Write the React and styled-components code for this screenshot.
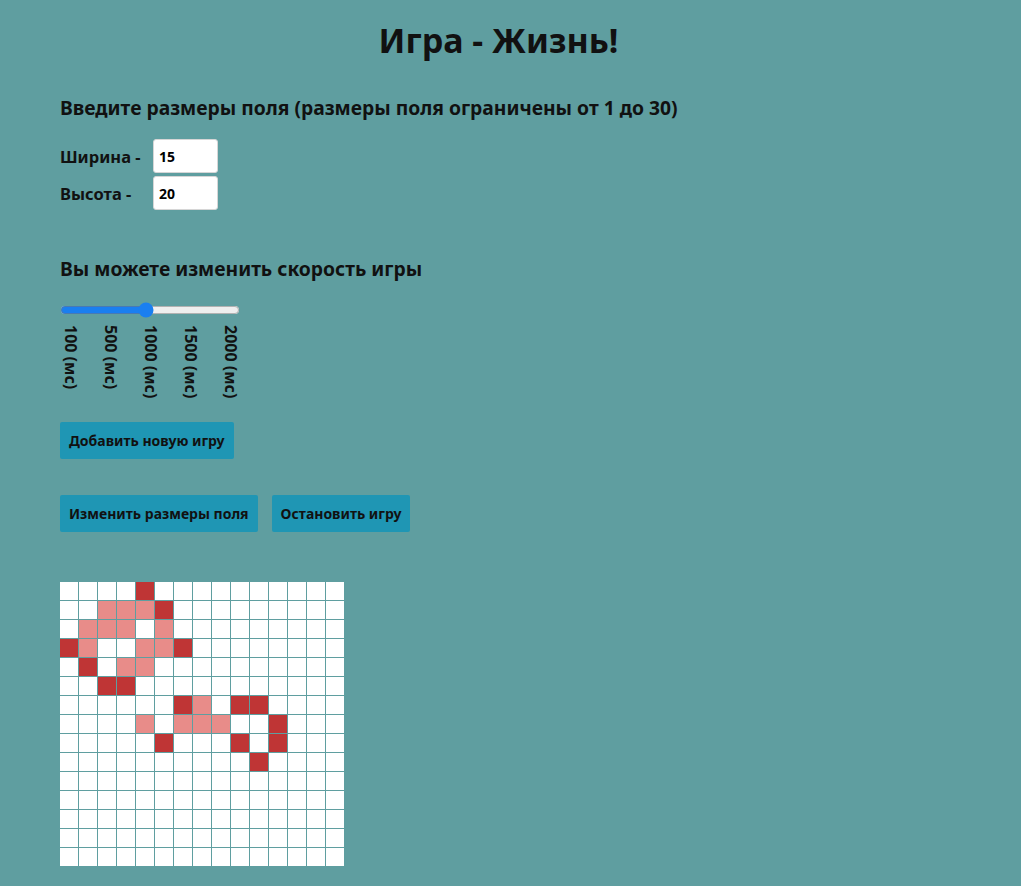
import React from 'react';
import styled, { createGlobalStyle } from 'styled-components';

const GlobalStyle = createGlobalStyle`
  body {
    margin: 0;
    background-color: #5f9ea0;
    font-family: "Noto Sans", Lato, sans-serif;
    color: #111;
  }
`;

const Page = styled.div`
  padding: 20px 60px 40px;
`;

const Title = styled.h1`
  margin: 0 24px 0 0;
  text-align: center;
  font-size: 34px;
  line-height: 40px;
  font-weight: 700;
`;

const Heading = styled.h3`
  margin: ${p => p.$top}px 0 0;
  font-size: 19.3px;
  line-height: 24px;
  font-weight: 700;
`;

const SizeForm = styled.div`
  margin-top: 19px;
  display: flex;
  flex-direction: column;
  gap: 3px;
`;

const SizeRow = styled.label`
  display: flex;
  align-items: center;
  font-size: 16.5px;
  font-weight: 700;
`;

const LabelText = styled.span`
  width: 93px;
`;

const SizeInput = styled.input`
  box-sizing: border-box;
  width: 65px;
  height: 34px;
  padding: 0 5px;
  border: 1px solid #d6d6d6;
  border-radius: 3px;
  background: #fff;
  font-family: inherit;
  font-size: 14px;
  font-weight: 700;
  color: #000;
`;

const SpeedBlock = styled.div`
  margin-top: 20px;
  width: 180px;
`;

const Range = styled.input`
  width: 180px;
  margin: 0;
  accent-color: #1a7ff0;
`;

const Ticks = styled.div`
  display: flex;
  gap: 18px;
  margin-top: 2px;
`;

const Tick = styled.span`
  writing-mode: vertical-rl;
  font-size: 16px;
  font-weight: 700;
  line-height: 22px;
`;

const ButtonRow = styled.div`
  display: flex;
  gap: 14px;
  margin-top: ${p => p.$top}px;
`;

const Button = styled.button`
  height: 37px;
  padding: 0 9px;
  border: none;
  border-radius: 2px;
  background-color: #1f96b4;
  color: #111;
  font-family: inherit;
  font-size: 14px;
  font-weight: 700;
  cursor: pointer;
`;

const Board = styled.div`
  margin-top: 50px;
  display: grid;
  grid-template-columns: repeat(15, 18px);
  grid-auto-rows: 18px;
  gap: 1px;
  width: max-content;
  background-color: #5f9ea0;
`;

const Cell = styled.div`
  background-color: ${p => (p.$state === 2 ? '#bf3535' : p.$state === 1 ? '#e88c89' : '#fff')};
`;

// 2 - живая клетка, 1 - след
const live = {
  0: { 4: 2 },
  1: { 2: 1, 3: 1, 4: 1, 5: 2 },
  2: { 1: 1, 2: 1, 3: 1, 5: 1 },
  3: { 0: 2, 1: 1, 4: 1, 5: 1, 6: 2 },
  4: { 1: 2, 3: 1, 4: 1 },
  5: { 2: 2, 3: 2 },
  6: { 6: 2, 7: 1, 9: 2, 10: 2 },
  7: { 4: 1, 6: 1, 7: 1, 8: 1, 11: 2 },
  8: { 5: 2, 9: 2, 11: 2 },
  9: { 10: 2 },
};

const ticks = ['100 (мс)', '500 (мс)', '1000 (мс)', '1500 (мс)', '2000 (мс)'];

export default function App() {
  const cells = [];
  for (let r = 0; r < 15; r++) {
    for (let c = 0; c < 15; c++) {
      cells.push(<Cell key={`${r}-${c}`} $state={(live[r] && live[r][c]) || 0} />);
    }
  }

  return (
    <Page>
      <GlobalStyle />
      <Title>Игра - Жизнь!</Title>
      <Heading $top={36}>Введите размеры поля (размеры поля ограничены от 1 до 30)</Heading>
      <SizeForm>
        <SizeRow>
          <LabelText>Ширина -</LabelText>
          <SizeInput defaultValue="15" />
        </SizeRow>
        <SizeRow>
          <LabelText>Высота -</LabelText>
          <SizeInput defaultValue="20" />
        </SizeRow>
      </SizeForm>
      <Heading $top={47}>Вы можете изменить скорость игры</Heading>
      <SpeedBlock>
        <Range type="range" min="100" max="2000" step="100" defaultValue="1000" />
        <Ticks>
          {ticks.map(t => <Tick key={t}>{t}</Tick>)}
        </Ticks>
      </SpeedBlock>
      <ButtonRow $top={24}>
        <Button>Добавить новую игру</Button>
      </ButtonRow>
      <ButtonRow $top={36}>
        <Button>Изменить размеры поля</Button>
        <Button>Остановить игру</Button>
      </ButtonRow>
      <Board>{cells}</Board>
    </Page>
  );
}
